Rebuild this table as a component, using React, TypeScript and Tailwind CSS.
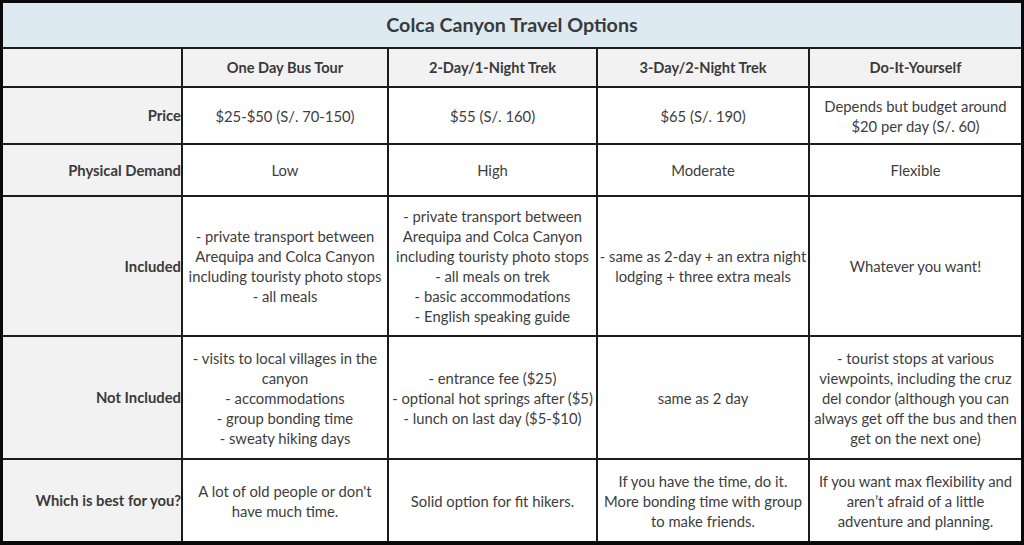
import React from "react";

const label = "bg-[#f2f2f2] flex items-center justify-end font-bold text-[#3a3a3a] whitespace-nowrap";
const cell = "bg-white flex items-center justify-center text-center text-[#3d3d3d] leading-[20px] whitespace-nowrap";
const head = "bg-[#f2f2f2] flex items-center justify-center font-bold text-[14.6px] text-[#3a3a3a] whitespace-nowrap";

function Lines({ lines }: { lines: string[] }) {
  return (
    <div>
      {lines.map((l, i) => (
        <div key={i}>{l}</div>
      ))}
    </div>
  );
}

export default function App() {
  return (
    <div
      className="w-[1024px] h-[545px] bg-[#0a0a0a] pt-[3px] pl-[3px] pr-[3px] pb-[4px] text-[14.8px]"
      style={{ fontFamily: "Lato, 'Open Sans', sans-serif" }}
    >
      <div className="grid h-full w-full grid-cols-[178px_204px_207px_210px_211px] grid-rows-[44px_37px_55px_50px_138px_121px_81px] gap-[2px] bg-[#1c1c1c]">
        <div className="col-span-5 bg-[#deeaf2] flex items-center justify-center font-bold text-[19.7px] text-[#3a3a3a]">
          Colca Canyon Travel Options
        </div>

        <div className="bg-[#f2f2f2]" />
        <div className={head}>One Day Bus Tour</div>
        <div className={head}>2-Day/1-Night Trek</div>
        <div className={head}>3-Day/2-Night Trek</div>
        <div className={head}>Do-It-Yourself</div>

        <div className={label}>Price</div>
        <div className={cell}>$25-$50 (S/. 70-150)</div>
        <div className={cell}>$55 (S/. 160)</div>
        <div className={cell}>$65 (S/. 190)</div>
        <div className={cell}>
          <Lines lines={["Depends but budget around", "$20 per day (S/. 60)"]} />
        </div>

        <div className={label}>Physical Demand</div>
        <div className={cell}>Low</div>
        <div className={cell}>High</div>
        <div className={cell}>Moderate</div>
        <div className={cell}>Flexible</div>

        <div className={label}>Included</div>
        <div className={cell}>
          <Lines
            lines={[
              "- private transport between",
              "Arequipa and Colca Canyon",
              "including touristy photo stops",
              "- all meals",
            ]}
          />
        </div>
        <div className={cell}>
          <Lines
            lines={[
              "- private transport between",
              "Arequipa and Colca Canyon",
              "including touristy photo stops",
              "- all meals on trek",
              "- basic accommodations",
              "- English speaking guide",
            ]}
          />
        </div>
        <div className={cell}>
          <Lines lines={["- same as 2-day + an extra night", "lodging + three extra meals"]} />
        </div>
        <div className={cell}>Whatever you want!</div>

        <div className={label}>Not Included</div>
        <div className={cell}>
          <Lines
            lines={[
              "- visits to local villages in the",
              "canyon",
              "- accommodations",
              "- group bonding time",
              "- sweaty hiking days",
            ]}
          />
        </div>
        <div className={cell}>
          <Lines
            lines={[
              "- entrance fee ($25)",
              "- optional hot springs after ($5)",
              "- lunch on last day ($5-$10)",
            ]}
          />
        </div>
        <div className={cell}>same as 2 day</div>
        <div className={cell}>
          <Lines
            lines={[
              "- tourist stops at various",
              "viewpoints, including the cruz",
              "del condor (although you can",
              "always get off the bus and then",
              "get on the next one)",
            ]}
          />
        </div>

        <div className={label}>Which is best for you?</div>
        <div className={cell}>
          <Lines lines={["A lot of old people or don't", "have much time."]} />
        </div>
        <div className={cell}>Solid option for fit hikers.</div>
        <div className={cell}>
          <Lines
            lines={[
              "If you have the time, do it.",
              "More bonding time with group",
              "to make friends.",
            ]}
          />
        </div>
        <div className={cell}>
          <Lines
            lines={[
              "If you want max flexibility and",
              "aren\u2019t afraid of a little",
              "adventure and planning.",
            ]}
          />
        </div>
      </div>
    </div>
  );
}
